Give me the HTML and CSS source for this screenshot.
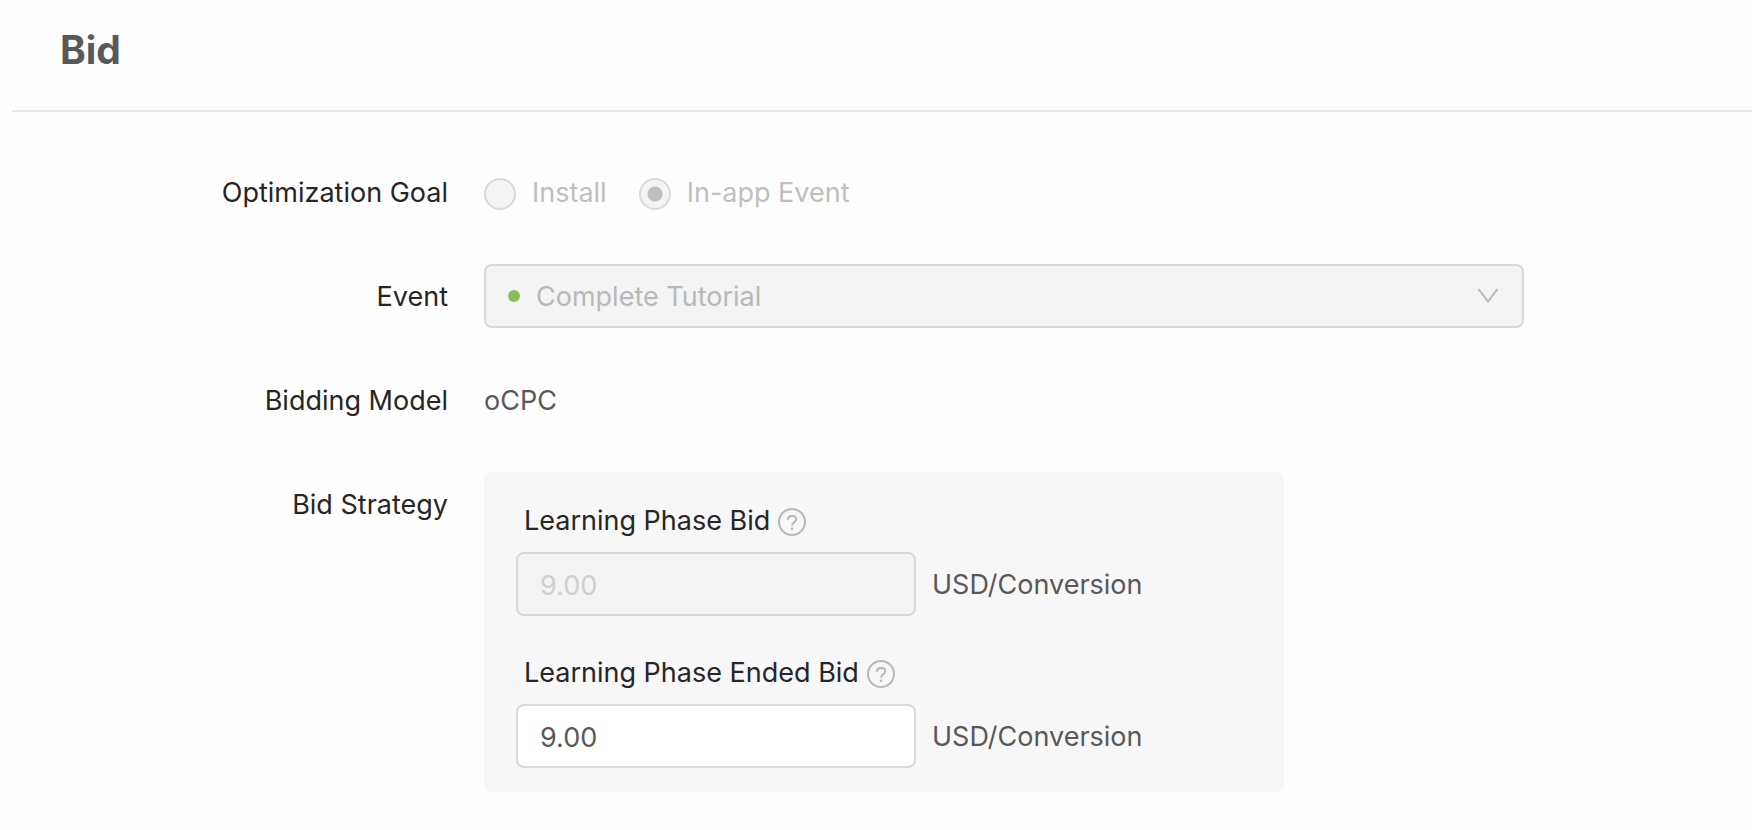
FILE: index.html
```html
<!DOCTYPE html>
<html lang="en">
<head>
  <meta charset="UTF-8">
  <meta name="viewport" content="width=device-width, initial-scale=1.0">
  <title>Bid</title>
  <link rel="stylesheet" href="styles.css">
</head>
<body>
  <section class="card">
    <header class="card-header">
      <h2 class="card-title">Bid</h2>
    </header>

    <form class="bid-form">
      <div class="form-row" role="radiogroup" aria-labelledby="goal-label">
        <span class="form-label" id="goal-label">Optimization Goal</span>
        <div class="radio-group">
          <label class="radio"><input type="radio" name="goal" value="install" disabled>Install</label>
          <label class="radio"><input type="radio" name="goal" value="event" checked disabled>In-app Event</label>
        </div>
      </div>

      <div class="form-row">
        <label class="form-label" for="event">Event</label>
        <div class="select-wrap">
          <span class="status-dot"></span>
          <select class="select" id="event" disabled>
            <option>Complete Tutorial</option>
          </select>
          <svg class="select-arrow" width="24" height="24" viewBox="0 0 24 24" fill="none" stroke="#b8b8b8" stroke-width="2">
            <path d="M2.5 5L12 17.5L21.5 5"/>
          </svg>
        </div>
      </div>

      <div class="form-row">
        <span class="form-label">Bidding Model</span>
        <span class="form-text">oCPC</span>
      </div>

      <div class="form-row">
        <span class="form-label">Bid Strategy</span>
        <div class="strategy-panel">
          <div class="bid-item">
            <div class="bid-label">
              <label for="learning-bid">Learning Phase Bid</label>
              <svg class="help-icon" width="28" height="28" viewBox="0 0 28 28" fill="none" stroke="#b8b8b8" stroke-width="2">
                <circle cx="14" cy="14" r="13"/>
                <path d="M9.8 11.8C9.8 9.4 11.6 8 14 8S18.2 9.4 18.2 11.4C18.2 14.2 14 14.2 14 17.8"/>
                <circle cx="14" cy="20.8" r="1.3" fill="#b8b8b8" stroke="none"/>
              </svg>
            </div>
            <div class="bid-field">
              <input class="input" type="text" id="learning-bid" value="9.00" disabled>
              <span class="unit">USD/Conversion</span>
            </div>
          </div>

          <div class="bid-item">
            <div class="bid-label">
              <label for="ended-bid">Learning Phase Ended Bid</label>
              <svg class="help-icon" width="28" height="28" viewBox="0 0 28 28" fill="none" stroke="#b8b8b8" stroke-width="2">
                <circle cx="14" cy="14" r="13"/>
                <path d="M9.8 11.8C9.8 9.4 11.6 8 14 8S18.2 9.4 18.2 11.4C18.2 14.2 14 14.2 14 17.8"/>
                <circle cx="14" cy="20.8" r="1.3" fill="#b8b8b8" stroke="none"/>
              </svg>
            </div>
            <div class="bid-field">
              <input class="input" type="text" id="ended-bid" value="9.00">
              <span class="unit">USD/Conversion</span>
            </div>
          </div>
        </div>
      </div>
    </form>
  </section>
</body>
</html>
```
FILE: styles.css
```css
:root {
  --title-color: #595959;
  --label-color: #262626;
  --text-color: #595959;
  --disabled-color: #bfbfbf;
  --border-color: #d9d9d9;
  --disabled-bg: #f4f4f4;
  --panel-bg: #f7f7f7;
}

* {
  box-sizing: border-box;
}

body {
  margin: 0;
  background: #fefefe;
  color: var(--text-color);
  font-family: Inter, "Liberation Sans", sans-serif;
  font-size: 27px;
  line-height: 66px;
}

.card {
  padding-left: 12px;
}

.card-header {
  padding: 20px 48px 30px;
  border-bottom: 2px solid #e8e8e8;
}

.card-title {
  margin: 0;
  font-size: 39px;
  line-height: 60px;
  font-weight: 700;
  color: var(--title-color);
}

.bid-form {
  display: flex;
  flex-direction: column;
  gap: 38px;
  padding: 48px 0 36px;
}

.form-row {
  display: grid;
  grid-template-columns: 436px minmax(0, 1040px);
  column-gap: 36px;
}

.form-label {
  text-align: right;
  color: var(--label-color);
}

.radio-group {
  display: flex;
  gap: 32px;
}

.radio {
  display: flex;
  align-items: center;
  gap: 16px;
  color: var(--disabled-color);
}

.radio input {
  appearance: none;
  width: 32px;
  height: 32px;
  margin: 2px 0 0;
  border: 2px solid var(--border-color);
  border-radius: 50%;
  background: var(--disabled-bg);
}

.radio input:checked {
  background: radial-gradient(circle, var(--disabled-color) 7px, var(--disabled-bg) 8px);
}

.select-wrap {
  position: relative;
}

.select,
.input {
  display: block;
  height: 64px;
  margin: 0;
  border: 2px solid var(--border-color);
  border-radius: 8px;
  font: inherit;
  line-height: 58px;
}

.select {
  appearance: none;
  width: 100%;
  padding: 2px 56px 0 50px;
  background: var(--disabled-bg);
  color: #b8b8b8;
  opacity: 1;
}

.status-dot {
  position: absolute;
  top: 26px;
  left: 24px;
  width: 12px;
  height: 12px;
  border-radius: 50%;
  background: #8bbd58;
}

.select-arrow {
  position: absolute;
  top: 20px;
  right: 24px;
}

.strategy-panel {
  display: flex;
  flex-direction: column;
  gap: 32px;
  max-width: 800px;
  padding: 24px 32px;
  border-radius: 8px;
  background: var(--panel-bg);
}

.bid-label {
  display: flex;
  align-items: center;
  gap: 8px;
  margin-bottom: 6px;
  padding-left: 8px;
  line-height: 50px;
  color: var(--label-color);
}

.help-icon {
  margin-top: 2px;
}

.bid-field {
  display: flex;
  align-items: center;
  gap: 16px;
}

.unit {
  padding-top: 2px;
  line-height: 62px;
}

.input {
  width: 400px;
  padding: 2px 22px 0;
  background: #fff;
  color: var(--text-color);
}

.input:disabled {
  background: var(--disabled-bg);
  color: #cfcfcf;
}
```
